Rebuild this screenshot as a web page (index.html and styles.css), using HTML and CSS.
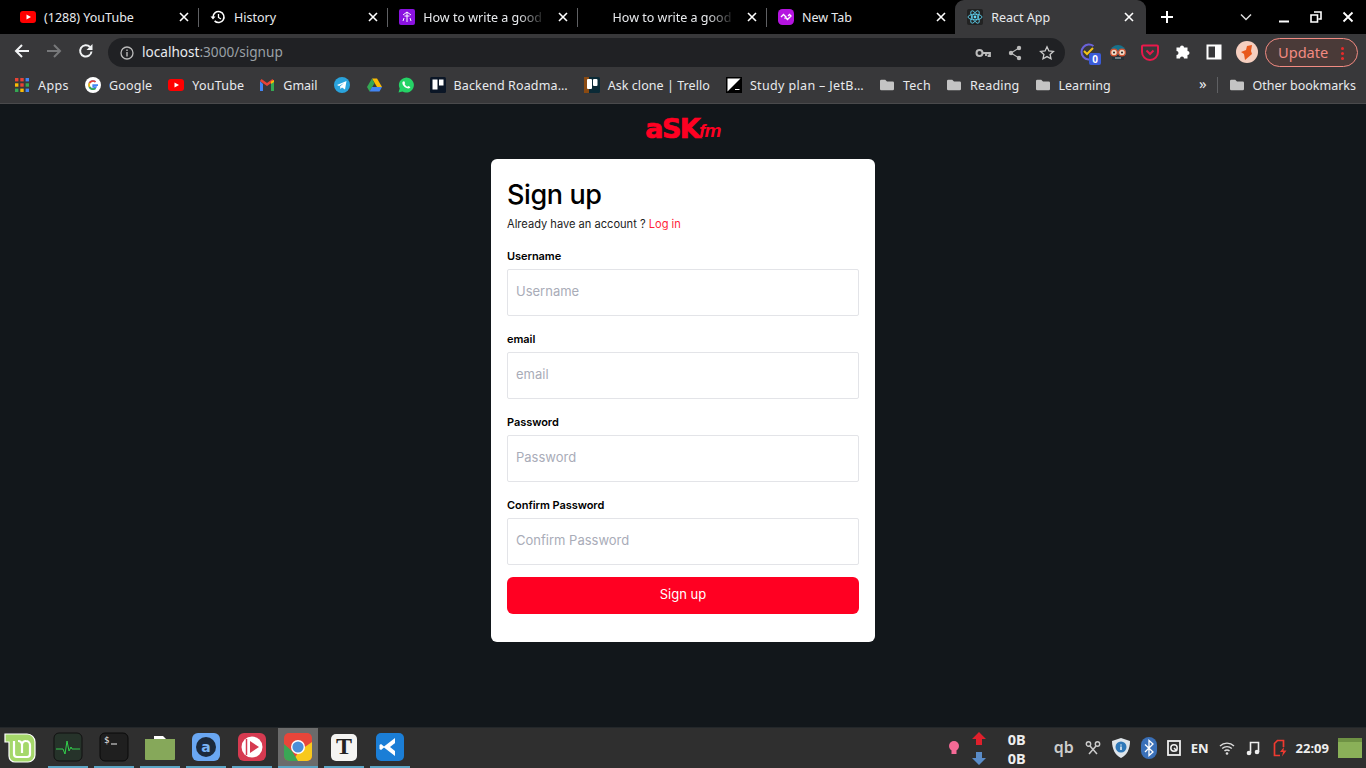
FILE: index.html
```html
<!DOCTYPE html>
<html lang="en">
<head>
<meta charset="utf-8">
<title>React App</title>
<link rel="stylesheet" href="styles.css">
</head>
<body>
<svg class="defs" width="0" height="0">
  <defs>
    <symbol id="yt" viewBox="0 0 16 16"><rect y="2" width="16" height="12" rx="3" fill="#f00"/><path d="M6.5 5.5v5L11 8z" fill="#fff"/></symbol>
    <symbol id="x" viewBox="0 0 10 10"><path d="M1 1l8 8M9 1l-8 8" stroke="#fff" stroke-width="1.6" fill="none"/></symbol>
    <symbol id="folder" viewBox="0 0 16 14"><path d="M0 2.5A1.5 1.5 0 0 1 1.500 1h4.500l2 2h6.500A1.500 1.500 0 0 1 16 4.500v7a1.500 1.500 0 0 1-1.500 1.500h-13A1.500 1.500 0 0 1 0 11.500z" fill="#c4c4c4"/></symbol>
    <symbol id="ho" viewBox="0 0 16 16"><rect width="16" height="16" rx="2" fill="#8a12e0"/><path d="M8 3v10M4 6l4-3 4 3M5 9l-1 3M11 9l1 3M5.500 7l5 0" stroke="#fff" stroke-width="1" fill="none"/></symbol>
  </defs>
</svg>

<header class="tabstrip">
  <div class="tab sep"><svg class="fav"><use href="#yt"/></svg><span class="tab-title">(1288) YouTube</span><svg class="tab-x"><use href="#x"/></svg></div>
  <div class="tab sep">
    <svg class="fav" viewBox="0 0 16 16"><path d="M3 8a5.500 5.500 0 1 1 1.600 3.900" stroke="#fff" stroke-width="1.500" fill="none"/><path d="M0.500 7.500h5L3 10.500z" fill="#fff"/><path d="M8.500 5v3.500l2.500 1.500" stroke="#fff" stroke-width="1.300" fill="none"/></svg>
    <span class="tab-title">History</span><svg class="tab-x"><use href="#x"/></svg></div>
  <div class="tab sep"><svg class="fav"><use href="#ho"/></svg><span class="tab-title fade">How to write a good</span><svg class="tab-x"><use href="#x"/></svg></div>
  <div class="tab sep"><span class="fav"></span><span class="tab-title fade">How to write a good</span><svg class="tab-x"><use href="#x"/></svg></div>
  <div class="tab">
    <svg class="fav" viewBox="0 0 16 16"><rect width="16" height="16" rx="4.500" fill="#b514e0"/><path d="M3 8l2.500-2.500L8 8l-1.500 1.500M8 9l1.500 1.500L13 7l-1.500-1.500L10 7" stroke="#fff" stroke-width="1.300" fill="none"/></svg>
    <span class="tab-title">New Tab</span><svg class="tab-x"><use href="#x"/></svg></div>
  <div class="tab active">
    <svg class="fav" viewBox="0 0 16 16"><rect width="16" height="16" rx="2" fill="#222"/><g stroke="#61dafb" stroke-width=".8" fill="none"><ellipse cx="8" cy="8" rx="7" ry="2.800"/><ellipse cx="8" cy="8" rx="7" ry="2.800" transform="rotate(60 8 8)"/><ellipse cx="8" cy="8" rx="7" ry="2.800" transform="rotate(120 8 8)"/></g><circle cx="8" cy="8" r="1.400" fill="#61dafb"/></svg>
    <span class="tab-title">React App</span><svg class="tab-x"><use href="#x"/></svg></div>
  <svg class="newtab" viewBox="0 0 12 12"><path d="M6 0v12M0 6h12" stroke="#fff" stroke-width="2"/></svg>
  <div class="winctl">
    <svg class="ctl ctl-menu" viewBox="0 0 12 12"><path d="M1 3.500l5 5 5-5" stroke="#ddd" stroke-width="1.500" fill="none"/></svg>
    <svg class="ctl" viewBox="0 0 12 12"><path d="M1 10.500h10" stroke="#fff" stroke-width="2"/></svg>
    <svg class="ctl" viewBox="0 0 12 12"><path d="M4 1h7v7H8.500M1 4h6.500v7H1z" stroke="#fff" stroke-width="1.600" fill="none"/></svg>
    <svg class="ctl" viewBox="0 0 12 12"><path d="M1.500 1.500l9 9M10.500 1.500l-9 9" stroke="#fff" stroke-width="1.800" fill="none"/></svg>
  </div>
</header>

<nav class="toolbar">
  <svg class="nav-ico" viewBox="0 0 16 16"><path d="M15 8H2M8 2L2 8l6 6" stroke="#f1f3f4" stroke-width="2" fill="none"/></svg>
  <svg class="nav-ico" viewBox="0 0 16 16"><path d="M1 8h13M8 2l6 6-6 6" stroke="#77787a" stroke-width="2" fill="none"/></svg>
  <svg class="nav-ico" viewBox="0 0 16 16"><path d="M13.500 8.500A5.700 5.700 0 1 1 12 4" stroke="#f1f3f4" stroke-width="2" fill="none"/><path d="M14.500 1v6h-6z" fill="#f1f3f4"/></svg>
  <div class="omnibox">
    <svg class="info" viewBox="0 0 14 14"><circle cx="7" cy="7" r="6" stroke="#bbb" stroke-width="1.300" fill="none"/><path d="M7 6v4.500M7 3.500v1.400" stroke="#bbb" stroke-width="1.400"/></svg>
    <span class="url">localhost<span class="url-dim">:3000/signup</span></span>
    <div class="omni-actions">
      <svg class="omni-ico" viewBox="0 0 16 16"><circle cx="4.500" cy="8" r="3" stroke="#bbb" stroke-width="2" fill="none"/><path d="M7.500 8H15v3h-1.500V9.500M11 9v2" stroke="#bbb" stroke-width="1.800" fill="none"/></svg>
      <svg class="omni-ico" viewBox="0 0 16 16"><path d="M12 3L4 8l8 5" stroke="#bbb" stroke-width="1.200" fill="none"/><circle cx="12" cy="3" r="2.200" fill="#bbb"/><circle cx="4" cy="8" r="2.200" fill="#bbb"/><circle cx="12" cy="13" r="2.200" fill="#bbb"/></svg>
      <svg class="omni-ico" viewBox="0 0 16 16"><path d="M8 1.800l1.900 4.100 4.500.5-3.300 3 .9 4.400L8 11.600l-4 2.200.9-4.400-3.300-3 4.500-.5z" stroke="#ccc" stroke-width="1.300" fill="none"/></svg>
    </div>
  </div>
  <div class="ext ext-check">
    <svg class="ext-ico" viewBox="0 0 20 20"><path d="M15.500 4A7.500 7.500 0 1 0 15.500 16" stroke="#6a62d8" stroke-width="2" fill="none"/><path d="M6 9l3 3 6-6" stroke="#f5c518" stroke-width="2" fill="none"/></svg>
    <span class="ext-badge">0</span>
  </div>
  <svg class="ext-ico gap-a" viewBox="0 0 20 20"><path d="M2 11a8 8 0 0 1 16 0v2H2z" fill="#17708a"/><path d="M4 13h12v5H4z" fill="#263238"/><path d="M7 16h6" stroke="#9fb4bb" stroke-width="1.200"/><circle cx="6" cy="10.500" r="3.300" fill="#f1d9c5" stroke="#d8502c" stroke-width="1.200"/><circle cx="14" cy="10.500" r="3.300" fill="#f1d9c5" stroke="#d8502c" stroke-width="1.200"/><circle cx="6" cy="10.500" r="1" fill="#222"/><circle cx="14" cy="10.500" r="1" fill="#222"/></svg>
  <svg class="ext-ico gap-b" viewBox="0 0 20 20"><path d="M3 3.500h14a1 1 0 0 1 1 1V10a8 8 0 0 1-16 0V4.500a1 1 0 0 1 1-1z" stroke="#e8194b" stroke-width="2" fill="none"/><path d="M6.500 8.500L10 12l3.500-3.500" stroke="#e8194b" stroke-width="2" fill="none"/></svg>
  <svg class="ext-ico gap-b" viewBox="0 0 20 20"><path d="M3 7h3.500a2 2 0 1 1 4 0H14v3.500a2 2 0 1 1 0 4V18h-3.500a2 2 0 1 0-4 0H3v-3.500a2 2 0 1 0 0-4z" fill="#fff" transform="translate(1.500 -1.500)"/></svg>
  <svg class="ext-ico gap-c" viewBox="0 0 20 20"><rect x="3.500" y="3.500" width="13" height="13" stroke="#fff" stroke-width="2" fill="none"/><rect x="11" y="3.500" width="5.500" height="13" fill="#fff"/></svg>
  <svg class="avatar" viewBox="0 0 22 22"><circle cx="11" cy="11" r="11" fill="#f6cfc0"/><path d="M16 4l-1 6 1 3-7 6-1-6-3-2 5-2 1-4z" fill="#e8581c"/></svg>
  <div class="update"><span>Update</span><span class="dots"></span></div>
</nav>

<nav class="bookmarks">
  <div class="bm">
    <svg class="bm-ico" viewBox="0 0 14 14"><g><rect x="0" y="0" width="3.400" height="3.400" fill="#ea4335"/><rect x="5.300" y="0" width="3.400" height="3.400" fill="#ea4335"/><rect x="10.600" y="0" width="3.400" height="3.400" fill="#4285f4"/><rect x="0" y="5.300" width="3.400" height="3.400" fill="#fbbc05"/><rect x="5.300" y="5.300" width="3.400" height="3.400" fill="#ea4335"/><rect x="10.600" y="5.300" width="3.400" height="3.400" fill="#34a853"/><rect x="0" y="10.600" width="3.400" height="3.400" fill="#34a853"/><rect x="5.300" y="10.600" width="3.400" height="3.400" fill="#fbbc05"/><rect x="10.600" y="10.600" width="3.400" height="3.400" fill="#4285f4"/></g></svg>
    <span class="ls-a">Apps</span></div>
  <div class="bm">
    <svg class="bm-ico16" viewBox="0 0 16 16"><circle cx="8" cy="8" r="8" fill="#fff"/><path d="M13 8.200H8.200v1.800h2.700a3 3 0 0 1-2.900 2 4 4 0 0 1 0-8 4 4 0 0 1 2.500.9" stroke="#4285f4" stroke-width="1.700" fill="none"/><path d="M10.500 4.900A4 4 0 0 0 4.500 6" stroke="#ea4335" stroke-width="1.700" fill="none"/><path d="M4.500 6a4 4 0 0 0 0 4" stroke="#fbbc05" stroke-width="1.700" fill="none"/><path d="M4.500 10a4 4 0 0 0 6 1.300" stroke="#34a853" stroke-width="1.700" fill="none"/></svg>
    <span class="ls-b">Google</span></div>
  <div class="bm"><svg class="bm-ico16"><use href="#yt"/></svg><span class="ls-b">YouTube</span></div>
  <div class="bm">
    <svg class="bm-ico" viewBox="0 0 14 12"><path d="M0 2v10h3V5z" fill="#4285f4"/><path d="M14 2v10h-3V5z" fill="#34a853"/><path d="M0 2l7 5 7-5-1.500-2L7 4 1.500 0z" fill="#ea4335"/><path d="M11 2.500L14 1v2l-3 2z" fill="#fbbc05"/></svg>
    <span>Gmail</span></div>
  <svg class="bm-ico16" viewBox="0 0 16 16"><circle cx="8" cy="8" r="8" fill="#2aa3dc"/><path d="M3 8l9.500-4-1.500 8.500-3-2-1.500 1.500-.5-2.500 4-3.500-5 3z" fill="#fff"/></svg>
  <svg class="bm-ico16 drive" viewBox="0 0 16 14"><path d="M5.300 0h5.400L16 9h-5.300z" fill="#fbbc05"/><path d="M5.300 0L0 9l2.700 5 5.300-9z" fill="#34a853"/><path d="M2.700 14h10.600L16 9H5.300z" fill="#4285f4"/></svg>
  <svg class="bm-ico16" viewBox="0 0 16 16"><path d="M0.500 15.500l1.200-4A7.500 7.500 0 1 1 4.500 14.500z" fill="#25d366"/><path d="M5 4.500c-1 1-.8 2.500.5 4.200S9 11.500 10.500 11.500c1 0 1.800-.8 1.800-1.500l-2-1-.8.800C8.500 9.500 7 8 6.500 7l.7-.8L6.300 4.300z" fill="#fff"/></svg>
  <div class="bm">
    <svg class="bm-ico16" viewBox="0 0 16 16"><rect width="16" height="16" rx="1.500" fill="#0b1626"/><rect x="2.500" y="2.500" width="5" height="10" fill="#fff"/><rect x="9" y="2.500" width="4.500" height="6" fill="#fff"/></svg>
    <span class="ls-d">Backend Roadma…</span></div>
  <div class="bm">
    <svg class="bm-ico16" viewBox="0 0 16 16"><rect width="16" height="16" rx="1.500" fill="#0b2a36"/><rect width="5" height="16" fill="#8a4a12"/><rect x="3" y="2" width="5" height="10" rx="1" fill="#fff"/><rect x="9" y="2" width="4.500" height="7" rx="1" fill="#fff"/></svg>
    <span class="ls-e">Ask clone | Trello</span></div>
  <div class="bm">
    <svg class="bm-ico16" viewBox="0 0 16 16"><rect width="16" height="16" fill="#000"/><path d="M1.500 1.500h13L1.500 14.500z" fill="#fff"/><path d="M9 12.500h4.500" stroke="#fff"/></svg>
    <span class="ls-f">Study plan – JetB…</span></div>
  <div class="bm"><svg class="bm-ico"><use href="#folder"/></svg><span class="ls-c">Tech</span></div>
  <div class="bm"><svg class="bm-ico"><use href="#folder"/></svg><span class="ls-b">Reading</span></div>
  <div class="bm"><svg class="bm-ico"><use href="#folder"/></svg><span>Learning</span></div>
  <div class="bm-end">
    <span class="chev">»</span>
    <span class="bm-sep"></span>
    <div class="bm"><svg class="bm-ico"><use href="#folder"/></svg><span>Other bookmarks</span></div>
  </div>
</nav>

<main class="page">
  <div class="logo"><span class="logo-ask">aSK</span><span class="logo-fm">fm</span></div>
  <form class="card">
    <h1 class="card-title">Sign up</h1>
    <p class="card-sub">Already have an account ? <a class="login" href="#">Log in</a></p>
    <div class="field"><label class="label">Username</label><input class="input" placeholder="Username"></div>
    <div class="field"><label class="label">email</label><input class="input" placeholder="email"></div>
    <div class="field"><label class="label">Password</label><input class="input" placeholder="Password"></div>
    <div class="field last"><label class="label">Confirm Password</label><input class="input" placeholder="Confirm Password"></div>
    <button class="submit" type="button">Sign up</button>
  </form>
</main>

<footer class="taskbar">
  <svg class="mint" viewBox="0 0 32 30"><path d="M1 1h22a8 8 0 0 1 8 8v13a7 7 0 0 1-7 7H11a6 6 0 0 1-6-6V9H1z" fill="#a5d86a" stroke="#fff" stroke-width="1.200"/><path d="M10 8v13a3 3 0 0 0 3 3h10a3 3 0 0 0 3-3V12a4 4 0 0 0-4-4 4 4 0 0 0-4 3 4 4 0 0 0-4-3" stroke="#fff" stroke-width="2.200" fill="none"/><path d="M18 11v9" stroke="#fff" stroke-width="2.200"/></svg>
  <div class="launchers">
    <div class="launch"><svg class="app" viewBox="0 0 30 30"><rect x="1" y="1" width="28" height="28" rx="5" fill="#26332a" stroke="#111"/><path d="M3 17h7l2 5 2-13 2 10 2-4 1 2h8" stroke="#33d04c" fill="none"/></svg></div>
    <div class="launch"><svg class="app" viewBox="0 0 30 30"><rect x="1" y="1" width="28" height="28" rx="5" fill="#1f1f1f" stroke="#0a0a0a"/><text class="term" x="5" y="11">$</text><path d="M12 12h6" stroke="#eee"/></svg></div>
    <div class="launch"><svg class="app" viewBox="0 0 30 30"><path d="M9 4h9l3 3H9z" fill="#fff"/><path d="M0 7h30v20a1 1 0 0 1-1 1H1a1 1 0 0 1-1-1z" fill="#86a85a"/></svg></div>
    <div class="launch"><svg class="app" viewBox="0 0 30 30"><rect x="1" y="1" width="28" height="28" rx="6" fill="#6aa7f2"/><circle cx="15" cy="15" r="10" fill="#1c2a3c"/><text class="app-a" x="15" y="20" text-anchor="middle">a</text></svg></div>
    <div class="launch"><svg class="app" viewBox="0 0 30 30"><rect x="1" y="1" width="28" height="28" rx="6" fill="#d63a50"/><circle cx="15" cy="15" r="10.500" fill="#fff"/><path d="M9.500 7v16" stroke="#d63a50" stroke-width="1.500"/><path d="M13 9l9 6-9 6z" fill="#d63a50"/></svg></div>
    <div class="launch on"><svg class="app" viewBox="0 0 30 30"><rect x="1" y="1" width="28" height="28" rx="5" fill="#e8463a"/><path d="M29 10v14a5 5 0 0 1-5 5H10l6-10z" fill="#f8c91c"/><path d="M1 12v12a5 5 0 0 0 5 5h9L9 19z" fill="#3aa655"/><circle cx="15" cy="15" r="7" fill="#fff"/><circle cx="15" cy="15" r="5.600" fill="#4c8ed8"/></svg></div>
    <div class="launch"><svg class="app" viewBox="0 0 30 30"><rect x="2" y="2" width="26" height="27" rx="5" fill="#f4f4f2"/><text class="app-t" x="15" y="22" text-anchor="middle">T</text></svg></div>
    <div class="launch"><svg class="app" viewBox="0 0 30 30"><rect x="1" y="1" width="28" height="28" rx="5" fill="#1b7ed6"/><path d="M20 6v18L9 15.500l-3 2.500-1.500-1v-4L6 12l3 2.500zM20 11l-5 4 5 4z" fill="#fff" fill-rule="evenodd"/></svg></div>
  </div>
  <div class="tray">
    <svg class="t-bulb" viewBox="0 0 12 16"><circle cx="6" cy="6" r="5" fill="#f56a96"/><rect x="3.500" y="10" width="5" height="4" fill="#f56a96"/></svg>
    <div class="t-arrows">
      <svg class="t-arrow" viewBox="0 0 14 13"><path d="M7 0l7 7H10v6H4V7H0z" fill="#e0202c"/></svg>
      <svg class="t-arrow" viewBox="0 0 14 13"><path d="M7 13l7-7H10V0H4v6H0z" fill="#5a8cc8"/></svg>
    </div>
    <div class="t-speed"><span>0B</span><span>0B</span></div>
    <span class="t-qb">qb</span>
    <svg class="t-ico t-sc" viewBox="0 0 16 16"><circle cx="3.500" cy="4" r="2.200" stroke="#ccc" stroke-width="1.400" fill="none"/><circle cx="12.500" cy="4" r="2.200" stroke="#ccc" stroke-width="1.400" fill="none"/><path d="M5 6l7 8M11 6l-7 8" stroke="#ccc" stroke-width="1.500"/></svg>
    <svg class="t-ico t-sh" viewBox="0 0 18 20"><path d="M9 0l9 3c0 8-3 14-9 17C3 17 0 11 0 3z" fill="#dfe5ea"/><circle cx="9" cy="9" r="5.500" fill="#2f78b8"/><path d="M9 6.500v1M9 8.500v3.500" stroke="#fff" stroke-width="1.400"/></svg>
    <svg class="t-ico t-bt" viewBox="0 0 16 22"><rect width="16" height="22" rx="8" fill="#3a70b8"/><path d="M4 7.500l8 7.500-4 3.500V3.500L12 7l-8 8" stroke="#fff" stroke-width="1.300" fill="none"/></svg>
    <svg class="t-ico t-dk" viewBox="0 0 14 16"><rect x="1" y="1" width="12" height="14" stroke="#eee" stroke-width="1.800" fill="none"/><circle cx="7" cy="8" r="3.200" stroke="#eee" stroke-width="1.500" fill="none"/><path d="M7 8l3 3" stroke="#eee" stroke-width="1.500"/></svg>
    <span class="t-en">EN</span>
    <svg class="t-ico t-wf" viewBox="0 0 16 14"><g stroke="#ddd" stroke-width="1.400" fill="none"><path d="M1 5a10 10 0 0 1 14 0"/><path d="M3.200 7.500a7 7 0 0 1 9.600 0"/><path d="M5.500 10a3.500 3.500 0 0 1 5 0"/></g><circle cx="8" cy="12.500" r="1.300" fill="#ddd"/></svg>
    <svg class="t-ico t-mu" viewBox="0 0 14 16"><path d="M4.500 13V2.500h8V12" stroke="#eee" stroke-width="1.600" fill="none"/><circle cx="3" cy="13" r="2.300" fill="#eee"/><circle cx="11" cy="12" r="2.300" fill="#eee"/></svg>
    <svg class="t-ico t-bat" viewBox="0 0 14 18"><path d="M7 16.500H1.500V4.500L4.500 1.500h6V8" stroke="#f03a30" stroke-width="1.700" fill="none"/><path d="M11 8l-4 5h3l-1 4.500 4.500-6H10.500z" fill="#f03a30"/></svg>
    <span class="t-time">22:09</span>
    <svg class="t-desk" viewBox="0 0 24 20"><rect width="24" height="20" fill="#8ab058"/><rect y="0" width="24" height="4" fill="#6f9244"/></svg>
  </div>
</footer>
</body>
</html>
```
FILE: styles.css
```css
* { box-sizing: border-box; }
html, body { margin: 0; height: 100%; }
body {
  width: 1366px;
  height: 768px;
  overflow: hidden;
  display: flex;
  flex-direction: column;
  background: #12171b;
  font-family: "Noto Sans", sans-serif;
  font-size: 12.5px;
  color: #e8eaed;
}
.defs { position: absolute; }

/* tab strip */
.tabstrip {
  height: 34px;
  flex: none;
  background: #000;
  display: flex;
  align-items: center;
  padding-left: 9px;
}
.tab {
  width: 189.3px;
  height: 34px;
  flex: none;
  display: flex;
  align-items: center;
  gap: 8px;
  padding: 0 10px 0 11px;
  position: relative;
}
.tab.sep::after {
  content: "";
  position: absolute;
  right: 0;
  top: 8px;
  height: 19px;
  width: 1px;
  background: #5f6063;
}
.tab:first-child { width: 190px; }
.tab.active {
  background: #38383a;
  border-radius: 9px 9px 0 0;
  width: 191px;
  margin-left: -1px;
  padding-left: 12px;
  padding-right: 12px;
}
.fav { width: 16px; height: 16px; flex: none; display: block; }
.tab-title {
  flex: 1;
  min-width: 0;
  white-space: nowrap;
  font-size: 12.5px;
  color: #e8eaed;
}
.tab-title.fade {
  -webkit-mask-image: linear-gradient(to right, #000 75%, transparent 97%);
  mask-image: linear-gradient(to right, #000 75%, transparent 97%);
}
.tab-x { width: 10px; height: 10px; flex: none; }
.newtab { width: 12px; height: 12px; flex: none; margin-left: 15px; }
.winctl {
  display: flex;
  align-items: center;
  margin-left: auto;
  padding-right: 12px;
}
.ctl { width: 12px; height: 12px; margin-left: 20px; }
.ctl:first-child { margin-left: 0; }
.ctl-menu { margin-right: 6px; }

/* toolbar */
.toolbar {
  height: 33px;
  flex: none;
  background: #38383a;
  display: flex;
  align-items: flex-end;
  padding-left: 14px;
}
.nav-ico { width: 16px; height: 16px; margin: 0 16px 8px 0; flex: none; }
.omnibox {
  width: 957px;
  height: 29px;
  margin-left: -2px;
  flex: none;
  background: #202124;
  border-radius: 15px;
  display: flex;
  align-items: center;
  padding: 0 10px 0 12px;
}
.info { width: 14px; height: 14px; flex: none; }
.url { margin-left: 8px; font-size: 13.6px; line-height: 18px; margin-bottom: 2px; color: #e8eaed; }
.url-dim { color: #9aa0a6; }
.omni-actions { margin-left: auto; display: flex; align-items: center; gap: 16px; }
.omni-ico { width: 16px; height: 16px; }
.ext { position: relative; width: 20px; height: 20px; margin: 0 0 5px 13px; flex: none; }
.ext-ico { width: 20px; height: 20px; flex: none; display: block; }
.ext-badge {
  position: absolute;
  left: 11px;
  top: 11px;
  width: 12px;
  height: 12px;
  border-radius: 2px;
  background: #3a5bd8;
  color: #fff;
  font-size: 10px;
  font-weight: 700;
  line-height: 12px;
  text-align: center;
}
.ext-ico.gap-a { margin: 0 0 5px 10px; }
.ext-ico.gap-b { margin: 0 0 5px 12px; }
.ext-ico.gap-c { margin: 0 0 5px 12px; }
.avatar { width: 22px; height: 22px; margin: 0 0 4px 12px; flex: none; }
.update {
  width: 93px;
  height: 29px;
  margin: 0 0 0 7px;
  flex: none;
  border: 1px solid #f28b82;
  border-radius: 15px;
  background: #4a3a38;
  color: #f28b82;
  font-size: 14.6px;
  line-height: 20px;
  display: flex;
  align-items: center;
  padding: 0 0 2px 12px;
  position: relative;
}
.dots {
  position: absolute;
  right: 13px;
  top: 8px;
  width: 3px;
  height: 3px;
  background: #ea2a2a;
  box-shadow: 0 5px 0 #ea2a2a, 0 10px 0 #ea2a2a;
  border-radius: 50%;
}

/* bookmarks */
.bookmarks {
  height: 37px;
  flex: none;
  background: #38383a;
  border-bottom: 1px solid #4a4a4c;
  display: flex;
  align-items: center;
  gap: 16px;
  padding: 0 10px 0 15px;
  font-size: 12.5px;
  color: #e8eaed;
}
.bm { display: flex; align-items: center; gap: 8px; flex: none; white-space: nowrap; }
.bm-ico { width: 14px; height: 14px; margin-right: 1px; flex: none; }
.bm-ico16 { width: 16px; height: 16px; flex: none; }
.bm-ico16.drive { width: 15px; margin-left: 1px; }
.ls-a { letter-spacing: .4px; }
.ls-b { letter-spacing: .2px; }
.ls-c { letter-spacing: .3px; }
.ls-d { letter-spacing: .13px; }
.ls-e { letter-spacing: .06px; }
.ls-f { letter-spacing: .35px; }
.bm-end { margin-left: auto; display: flex; align-items: center; }
.chev { font-size: 15px; line-height: 1; color: #e8eaed; margin-bottom: 3px; }
.bm-sep { width: 1px; height: 16px; background: #5f6063; margin: 0 12px 0 10px; }

/* page */
.page {
  flex: 1;
  min-height: 0;
  display: flex;
  flex-direction: column;
  align-items: center;
}
.logo {
  height: 55px;
  flex: none;
  display: flex;
  align-items: center;
  padding-bottom: 6px;
  color: #ff0022;
  white-space: nowrap;
}
.logo-ask {
  font-family: "DejaVu Sans", sans-serif;
  font-weight: 700;
  font-size: 27px;
  letter-spacing: -1.6px;
  -webkit-text-stroke: .7px #ff0022;
}
.logo-fm {
  font-family: "Liberation Sans", sans-serif;
  font-style: italic;
  font-weight: 700;
  font-size: 19px;
  letter-spacing: -.8px;
  margin: 5px 0 0 0;
}
.card {
  width: 384px;
  height: 483px;
  flex: none;
  background: #fff;
  border-radius: 6px;
  padding: 16px 16px 28px;
  font-family: Inter, sans-serif;
  color: #000;
}
.card-title {
  margin: 0;
  font-size: 27px;
  font-weight: 500;
  line-height: 40px;
  letter-spacing: -.4px;
}
.card-sub {
  margin: 2px 0 17px;
  font-size: 11.1px;
  line-height: 14px;
  color: #1c1c1c;
}
.login { color: #ff1f3a; text-decoration: none; }
.field { margin-bottom: 15px; }
.field.last { margin-bottom: 12px; }
.label {
  display: block;
  height: 16px;
  margin-bottom: 5px;
  font-size: 11px;
  font-weight: 600;
  letter-spacing: -.05px;
  line-height: 16px;
  color: #000;
}
.input {
  display: block;
  width: 100%;
  height: 47px;
  padding: 0 8px 3px;
  border: 1px solid #e3e4e8;
  border-radius: 2px;
  background: #fff;
  font-family: Inter, sans-serif;
  font-size: 13px;
  outline: none;
}
.input::placeholder { color: #a9acb8; opacity: 1; }
.submit {
  display: block;
  width: 100%;
  height: 37px;
  padding: 0 0 3px;
  border: 0;
  border-radius: 6px;
  background: #ff0022;
  color: #fff;
  font-family: Inter, sans-serif;
  font-size: 13px;
}

/* taskbar */
.taskbar {
  height: 41px;
  flex: none;
  background: #2f2f2f;
  border-top: 1px solid #23272a;
  display: flex;
  align-items: center;
  padding-left: 4px;
}
.mint { width: 32px; height: 30px; flex: none; }
.launchers { display: flex; gap: 6px; margin-left: 12px; height: 100%; }
.launch {
  width: 40px;
  height: 100%;
  display: flex;
  align-items: center;
  justify-content: center;
  border-bottom: 2px solid #5ba5c5;
}
.launch.on { background: #6b6b6b; }
.app { width: 30px; height: 30px; display: block; }
.term { font-family: "DejaVu Sans Mono", monospace; font-size: 9px; fill: #eee; }
.app-a { font-family: "DejaVu Sans", sans-serif; font-size: 14px; font-weight: 700; fill: #7ab4f5; }
.app-t { font-family: "Liberation Serif", serif; font-size: 24px; font-weight: 700; fill: #222; }
.tray {
  margin-left: auto;
  display: flex;
  align-items: center;
  font-family: "Noto Sans", sans-serif;
  font-weight: 700;
  font-size: 13px;
  color: #eee;
}
.t-bulb { width: 12px; height: 16px; flex: none; }
.t-arrows { display: flex; flex-direction: column; gap: 7px; margin-left: 12px; }
.t-arrow { width: 14px; height: 13px; display: block; }
.t-speed {
  display: flex;
  flex-direction: column;
  align-items: center;
  margin: 1px 0 0 22px;
  line-height: 19px;
  font-size: 14.5px;
}
.t-qb { font-size: 16px; font-weight: 600; color: #ccc; margin-left: 28px; margin-bottom: 2px; }
.t-ico { flex: none; display: block; }
.t-sc { width: 16px; height: 16px; margin-left: 11px; }
.t-sh { width: 18px; height: 20px; margin-left: 11px; }
.t-bt { width: 16px; height: 22px; margin-left: 11px; }
.t-dk { width: 14px; height: 16px; margin-left: 10px; }
.t-en { margin-left: 10px; font-size: 13px; }
.t-wf { width: 16px; height: 14px; margin-left: 10px; }
.t-mu { width: 14px; height: 16px; margin-left: 11px; }
.t-bat { width: 14px; height: 18px; margin-left: 13px; }
.t-time { margin-left: 9px; }
.t-desk { width: 24px; height: 20px; margin: 0 4px 0 9px; flex: none; }
```
